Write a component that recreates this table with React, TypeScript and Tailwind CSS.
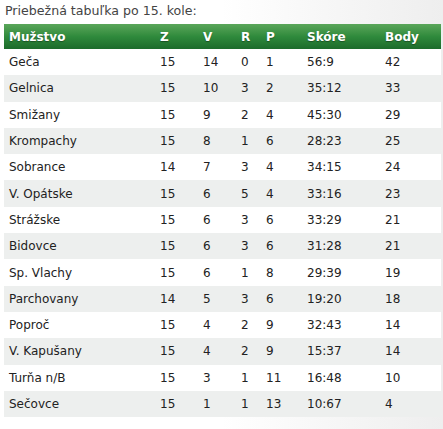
const rows: [string, number, number, number, number, string, number][] = [
  ['Geča', 15, 14, 0, 1, '56:9', 42],
  ['Gelnica', 15, 10, 3, 2, '35:12', 33],
  ['Smižany', 15, 9, 2, 4, '45:30', 29],
  ['Krompachy', 15, 8, 1, 6, '28:23', 25],
  ['Sobrance', 14, 7, 3, 4, '34:15', 24],
  ['V. Opátske', 15, 6, 5, 4, '33:16', 23],
  ['Strážske', 15, 6, 3, 6, '33:29', 21],
  ['Bidovce', 15, 6, 3, 6, '31:28', 21],
  ['Sp. Vlachy', 15, 6, 1, 8, '29:39', 19],
  ['Parchovany', 14, 5, 3, 6, '19:20', 18],
  ['Poproč', 15, 4, 2, 9, '32:43', 14],
  ['V. Kapušany', 15, 4, 2, 9, '15:37', 14],
  ['Turňa n/B', 15, 3, 1, 11, '16:48', 10],
  ['Sečovce', 15, 1, 1, 13, '10:67', 4],
];

const cols = 'grid grid-cols-[156px_43px_38px_25px_41px_78px_1fr] items-center';

export default function App() {
  return (
    <div className="w-[443px] h-[429px] bg-gradient-to-r from-white via-white to-[#eeeeee] font-['DejaVu_Sans',Verdana,sans-serif] text-[12px] text-[#222]">
      <div className="pt-[3px] pl-[5px] h-[24px] text-[12.6px] text-[#444] leading-[16px]">
        Priebežná tabuľka po 15. kole:
      </div>
      <div className="ml-[4px] mr-[2px]">
        {/* header */}
        <div className={`${cols} h-[25px] bg-gradient-to-b from-[#5aa65a] via-[#2f8a3c] to-[#1c6b2b] text-white font-bold [text-shadow:0_1px_1px_rgba(0,0,0,0.35)]`}>
          <div className="pl-[5px]">Mužstvo</div>
          <div>Z</div>
          <div>V</div>
          <div>R</div>
          <div>P</div>
          <div>Skóre</div>
          <div>Body</div>
        </div>
        {rows.map((r, i) => (
          <div
            key={r[0]}
            className={`${cols} h-[26.3px] ${i % 2 === 0 ? 'bg-white' : 'bg-[#edefee]'}`}
          >
            <div className="pl-[5px]">{r[0]}</div>
            <div>{r[1]}</div>
            <div>{r[2]}</div>
            <div>{r[3]}</div>
            <div>{r[4]}</div>
            <div>{r[5]}</div>
            <div>{r[6]}</div>
          </div>
        ))}
      </div>
    </div>
  );
}
